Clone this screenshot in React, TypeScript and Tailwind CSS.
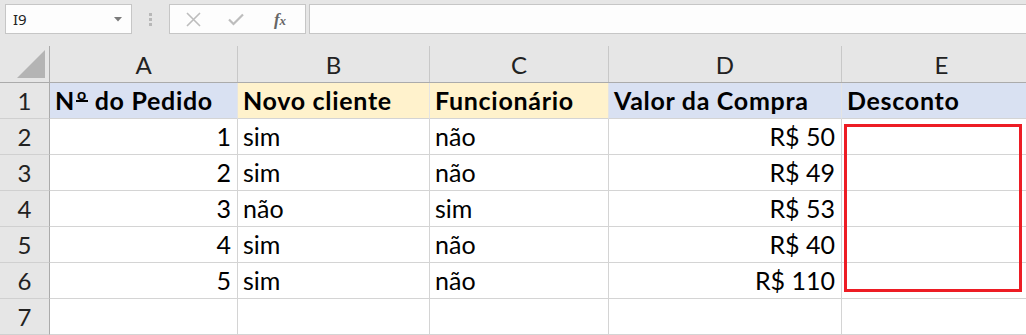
import React from "react";

const cols = [
  { key: "A", w: "w-[188px]" },
  { key: "B", w: "w-[192px]" },
  { key: "C", w: "w-[179px]" },
  { key: "D", w: "w-[233px]" },
  { key: "E", w: "w-[200px]" },
];

type Cell = { t: React.ReactNode; align?: "r" | "l"; bold?: boolean; bg?: string };

const rows: Cell[][] = [
  [
    {
      t: (
        <span>
          N
          <span className="relative top-[-10px] inline-block text-[16px] leading-[11px] border-b-[2px] border-black ml-[1px] px-[1px] pb-[1px]">
            o
          </span>{" "}
          do Pedido
        </span>
      ),
      bold: true,
      bg: "bg-[#d9e1f2]",
    },
    { t: "Novo cliente", bold: true, bg: "bg-[#fff2cc]" },
    { t: "Funcionário", bold: true, bg: "bg-[#fff2cc]" },
    { t: "Valor da Compra", bold: true, bg: "bg-[#d9e1f2]" },
    { t: "Desconto", bold: true, bg: "bg-[#d9e1f2]" },
  ],
  [{ t: "1", align: "r" }, { t: "sim" }, { t: "não" }, { t: "R$ 50", align: "r" }, { t: "" }],
  [{ t: "2", align: "r" }, { t: "sim" }, { t: "não" }, { t: "R$ 49", align: "r" }, { t: "" }],
  [{ t: "3", align: "r" }, { t: "não" }, { t: "sim" }, { t: "R$ 53", align: "r" }, { t: "" }],
  [{ t: "4", align: "r" }, { t: "sim" }, { t: "não" }, { t: "R$ 40", align: "r" }, { t: "" }],
  [{ t: "5", align: "r" }, { t: "sim" }, { t: "não" }, { t: "R$ 110", align: "r" }, { t: "" }],
  [{ t: "" }, { t: "" }, { t: "" }, { t: "" }, { t: "" }],
];

export default function App() {
  return (
    <div
      className="relative w-[1026px] h-[335px] overflow-hidden bg-white text-black"
      style={{ fontFamily: "Lato, 'Liberation Sans', sans-serif" }}
    >
      {/* Toolbar */}
      <div className="h-[46px] bg-[#e6e6e6] flex items-start pt-[4px] pl-[5px]">
        <div className="w-[127px] h-[30px] bg-[#fdfdfd] border border-[#c6c6c6] flex items-center justify-between pl-[7px] pr-[9px]">
          <span
            className="text-[15px] text-[#222]"
            style={{ fontFamily: "'Noto Sans', 'Open Sans', sans-serif" }}
          >
            I9
          </span>
          <svg width="8" height="5" viewBox="0 0 8 5">
            <path d="M0 0 L8 0 L4 4.5 Z" fill="#7a7a7a" />
          </svg>
        </div>
        <div className="w-[37px] h-[30px] flex flex-col items-center justify-center gap-[2px]">
          <div className="w-[3px] h-[3px] bg-[#b8b8b8]" />
          <div className="w-[3px] h-[3px] bg-[#b8b8b8]" />
          <div className="w-[3px] h-[3px] bg-[#b8b8b8]" />
        </div>
        <div className="w-[137px] h-[30px] bg-[#fdfdfd] border border-[#c6c6c6] flex items-center">
          <div className="w-[44px] flex justify-center pl-[2px]">
            <svg width="15" height="15" viewBox="0 0 15 15">
              <path d="M1 1 L14 14 M14 1 L1 14" stroke="#bdbdbd" strokeWidth="1.6" />
            </svg>
          </div>
          <div className="w-[44px] flex justify-center">
            <svg width="16" height="13" viewBox="0 0 16 13">
              <path d="M1 6.5 L5.5 11 L15 1.5" stroke="#bdbdbd" strokeWidth="2.2" fill="none" />
            </svg>
          </div>
          <div className="w-[44px] flex justify-center">
            <span
              className="italic text-[17px] text-[#666] font-bold leading-none"
              style={{ fontFamily: "'Liberation Serif', 'DejaVu Serif', serif" }}
            >
              f<span className="text-[13px]">x</span>
            </span>
          </div>
        </div>
        <div className="ml-[3px] flex-1 h-[30px] bg-[#fdfdfd] border border-[#c6c6c6] border-r-0" />
      </div>

      {/* Column header row */}
      <div className="flex h-[37px] bg-[#e6e6e6] border-b border-[#ababab]">
        <div className="w-[50px] h-[36px] border-r border-[#ababab] relative shrink-0">
          <svg className="absolute left-0 top-0" width="49" height="36" viewBox="0 0 49 36">
            <path d="M17 32 L45 32 L45 4 Z" fill="#b4b4b4" />
          </svg>
        </div>
        {cols.map((c) => (
          <div
            key={c.key}
            className={`${c.w} shrink-0 h-[36px] border-r border-[#c8c8c8] flex items-end justify-center pb-[5px] text-[24px] leading-none text-[#222]`}
          >
            {c.key}
          </div>
        ))}
      </div>

      {/* Data rows */}
      {rows.map((r, i) => (
        <div key={i} className="flex h-[36px]">
          <div className="w-[50px] shrink-0 h-[36px] bg-[#e6e6e6] border-r border-b border-r-[#ababab] border-b-[#d0d0d0] flex items-end justify-center pb-[5px] text-[24px] leading-none text-[#222]">
            {i + 1}
          </div>
          {r.map((cell, j) => (
            <div
              key={j}
              className={`${cols[j].w} shrink-0 h-[36px] border-r border-b ${
                cell.bg ? `${cell.bg} border-r-[#e4e4e4] border-b-[#d4d4d4]` : "border-[#d4d4d4]"
              } flex items-end ${cell.align === "r" ? "justify-end pr-[6px]" : "justify-start pl-[5px]"} pb-[5px] text-[25px] leading-none whitespace-nowrap ${
                cell.bold ? "font-bold tracking-[0.7px]" : ""
              }`}
            >
              {cell.t}
            </div>
          ))}
        </div>
      ))}

      {/* Red selection box */}
      <div className="absolute left-[844px] top-[124px] w-[178px] h-[168px] border-[3px] border-[#ed1c24]" />
    </div>
  );
}
